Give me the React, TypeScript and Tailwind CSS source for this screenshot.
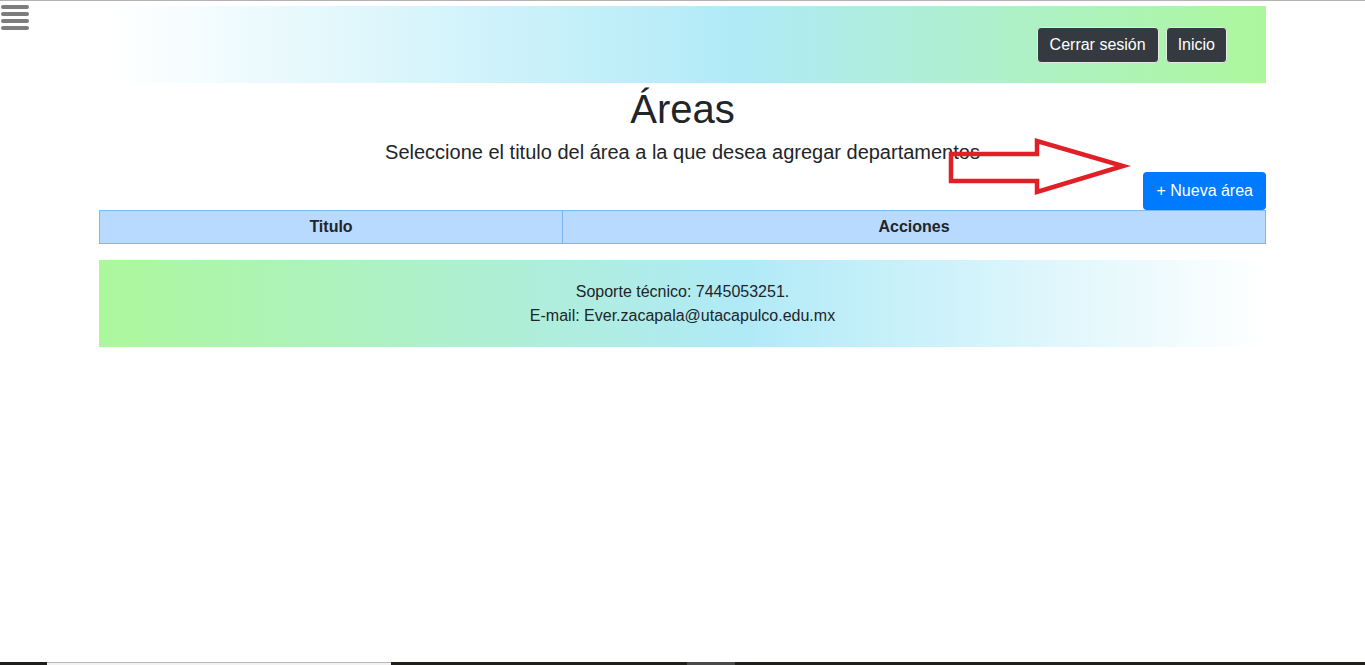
export default function App() {
  return (
    <div className="relative flex min-h-[665px] flex-col bg-white font-['Liberation_Sans',Arial,sans-serif] text-[#212529]">
      {/* Top edge */}
      <div className="h-px bg-[#b3b3b3]" />

      {/* Menu toggle */}
      <button className="absolute left-px top-[5px] flex w-[28px] flex-col gap-[3px]">
        <span className="h-[4px] rounded-sm bg-[#7d7d7d]" />
        <span className="h-[4px] rounded-sm bg-[#7d7d7d]" />
        <span className="h-[4px] rounded-sm bg-[#7d7d7d]" />
        <span className="h-[4px] rounded-sm bg-[#7d7d7d]" />
      </button>

      <div className="relative mx-auto mt-[5px] w-[1167px]">
        {/* Header */}
        <header className="flex h-[77px] items-center justify-end gap-[7px] bg-[linear-gradient(to_right,#ffffff_1%,#b0eaf7_55%,#acf79c_100%)] pr-[39px]">
          <button className="h-[36px] rounded-[4px] border border-[#e8e8e8] bg-[#343a40] px-[12px] text-[16px] text-white">
            Cerrar sesión
          </button>
          <button className="h-[36px] rounded-[4px] border border-[#e8e8e8] bg-[#343a40] px-[11px] text-[16px] text-white">
            Inicio
          </button>
        </header>

        {/* Title */}
        <h1 className="mt-[2px] text-center text-[40px] leading-[48px]">Áreas</h1>
        <p className="mt-[4px] text-center text-[20px] leading-[30px]">
          Seleccione el titulo del área a la que desea agregar departamentos
        </p>

        {/* Arrow pointing to the button */}
        <svg
          className="absolute left-[841px] top-[120px]"
          width="200"
          height="80"
          viewBox="940 125 200 80"
        >
          <polygon
            points="951,153 1037,153 1037,140 1123,165 1037,191 1037,180 951,180"
            fill="none"
            stroke="#e01f26"
            strokeWidth="4.5"
          />
        </svg>

        <div className="mt-[5px] flex justify-end">
          <button className="h-[38px] rounded-[4px] bg-[#007bff] px-[13px] text-[16px] text-white">
            + Nueva área
          </button>
        </div>

        {/* Table */}
        <table className="w-full border-collapse">
          <thead>
            <tr className="bg-[#b8daff]">
              <th className="h-[33px] w-[463px] border border-[#7ab8f5] p-0 text-[16px] font-bold">Titulo</th>
              <th className="h-[33px] border border-[#7ab8f5] p-0 text-[16px] font-bold">Acciones</th>
            </tr>
          </thead>
        </table>

        {/* Footer */}
        <footer className="mt-[16px] flex h-[87px] flex-col items-center justify-center bg-[linear-gradient(to_right,#acf79c_0%,#b0eaf7_55%,#ffffff_100%)] text-[16px] leading-[24px]">
          <span>Soporte técnico: 7445053251.</span>
          <span>E-mail: Ever.zacapala@utacapulco.edu.mx</span>
        </footer>
      </div>

      {/* Bottom strip */}
      <div className="mt-auto flex h-[3px]">
        <div className="w-[47px] bg-[#1e1e1c]" />
        <div className="w-[344px] border-t border-[#b9b9b9] bg-[#f2f2f2]" />
        <div className="w-[296px] bg-[#201f1c]" />
        <div className="w-[48px] bg-[#4a4a4a]" />
        <div className="flex-1 bg-[#201f1c]" />
      </div>
    </div>
  );
}
